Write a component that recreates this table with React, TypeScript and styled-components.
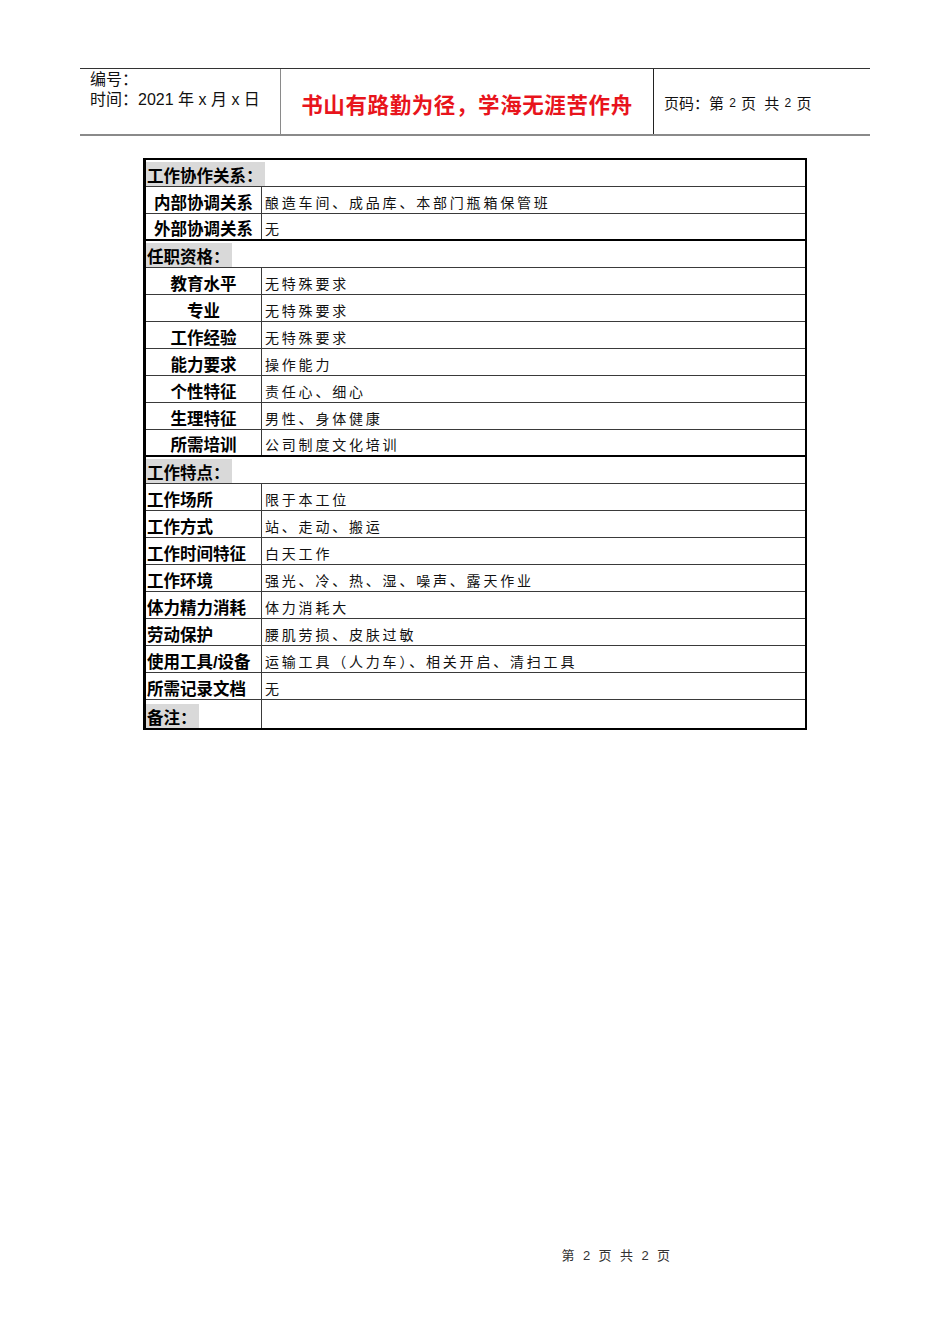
import React from "react";
import styled, { createGlobalStyle } from "styled-components";

const GlobalStyle = createGlobalStyle`
  html, body {
    margin: 0;
    padding: 0;
    background: #ffffff;
  }
  body {
    font-family: "Liberation Sans", "Noto Sans CJK SC", sans-serif;
    color: #000;
  }
`;

type Row =
  | { kind: "section"; title: string; thick?: boolean; withCell?: boolean }
  | { kind: "item"; label: string; value: string; center?: boolean; thick?: boolean };

const rows: Row[] = [
  { kind: "section", title: "工作协作关系：" },
  { kind: "item", label: "内部协调关系", value: "酿造车间、成品库、本部门瓶箱保管班", center: true },
  { kind: "item", label: "外部协调关系", value: "无", center: true, thick: true },
  { kind: "section", title: "任职资格：" },
  { kind: "item", label: "教育水平", value: "无特殊要求", center: true },
  { kind: "item", label: "专业", value: "无特殊要求", center: true },
  { kind: "item", label: "工作经验", value: "无特殊要求", center: true },
  { kind: "item", label: "能力要求", value: "操作能力", center: true },
  { kind: "item", label: "个性特征", value: "责任心、细心", center: true },
  { kind: "item", label: "生理特征", value: "男性、身体健康", center: true },
  { kind: "item", label: "所需培训", value: "公司制度文化培训", center: true, thick: true },
  { kind: "section", title: "工作特点：" },
  { kind: "item", label: "工作场所", value: "限于本工位" },
  { kind: "item", label: "工作方式", value: "站、走动、搬运" },
  { kind: "item", label: "工作时间特征", value: "白天工作" },
  { kind: "item", label: "工作环境", value: "强光、冷、热、湿、噪声、露天作业" },
  { kind: "item", label: "体力精力消耗", value: "体力消耗大" },
  { kind: "item", label: "劳动保护", value: "腰肌劳损、皮肤过敏" },
  { kind: "item", label: "使用工具/设备", value: "运输工具（人力车）、相关开启、清扫工具" },
  { kind: "item", label: "所需记录文档", value: "无" },
  { kind: "section", title: "备注：", withCell: true },
];

const App = () => {
  return (
    <Page>
      <GlobalStyle />
      <Header>
        <InfoCell>
          <InfoLine>编号：</InfoLine>
          <InfoLine>时间：2021 年 x 月 x 日</InfoLine>
        </InfoCell>
        <MottoCell>书山有路勤为径，学海无涯苦作舟</MottoCell>
        <PageCell>
          页码：第 <Num>2</Num> 页&nbsp; 共 <Num>2</Num> 页
        </PageCell>
      </Header>

      <Sheet>
        {rows.map((row, i) =>
          row.kind === "section" ? (
            <SheetRow key={i} $thick={row.thick} $last={i === rows.length - 1}>
              <SectionCell $withCell={row.withCell}>
                <SectionTitle>{row.title}</SectionTitle>
              </SectionCell>
              {row.withCell && <ValueCell />}
            </SheetRow>
          ) : (
            <SheetRow key={i} $thick={row.thick} $last={i === rows.length - 1}>
              <LabelCell $center={row.center}>{row.label}</LabelCell>
              <ValueCell>{row.value}</ValueCell>
            </SheetRow>
          )
        )}
      </Sheet>

      <Footer>第 2 页 共 2 页</Footer>
    </Page>
  );
};

export default App;

// ===== Styled Components ===== //

const Page = styled.div`
  width: 950px;
  min-height: 1344px;
  box-sizing: border-box;
  padding: 68px 80px 0 80px;
  display: flex;
  flex-direction: column;
`;

const Header = styled.div`
  display: flex;
  width: 790px;
  height: 68px;
  box-sizing: border-box;
  border-top: 1px solid #333;
  border-bottom: 2px solid #8a8a8a;
`;

const InfoCell = styled.div`
  width: 201px;
  box-sizing: border-box;
  padding: 1px 0 0 10px;
  border-right: 1px solid #8a8a8a;
`;

const InfoLine = styled.div`
  font-size: 16px;
  line-height: 20px;
  color: #111;
`;

const MottoCell = styled.div`
  width: 373px;
  box-sizing: border-box;
  display: flex;
  align-items: center;
  justify-content: center;
  padding-top: 4px;
  border-right: 1px solid #222;
  font-size: 21.5px;
  font-weight: 700;
  color: #e8141c;
  letter-spacing: 0.6px;
`;

const PageCell = styled.div`
  flex: 1;
  display: flex;
  align-items: center;
  padding: 2px 0 0 10px;
  font-size: 15px;
  color: #111;
  white-space: pre;
`;

const Num = styled.span`
  font-size: 12px;
  margin: 0 1px;
`;

const Sheet = styled.div`
  margin: 22px 0 0 63px;
  width: 664px;
  box-sizing: border-box;
  border: 2px solid #000;
  border-left-width: 3px;
`;

const SheetRow = styled.div<{ $thick?: boolean; $last?: boolean }>`
  display: flex;
  height: ${(p) => (p.$last ? "27.5px" : "27px")};
  box-sizing: border-box;
  border-bottom: ${(p) =>
    p.$last ? "none" : p.$thick ? "2.5px solid #000" : "1px solid #3a3a3a"};
`;

const SectionCell = styled.div<{ $withCell?: boolean }>`
  ${(p) => (p.$withCell ? "width: 116px;" : "flex: 1;")}
  box-sizing: border-box;
  display: flex;
  align-items: flex-end;
  padding: 0;
  ${(p) => (p.$withCell ? "border-right: 1px solid #3a3a3a;" : "")}
`;

const SectionTitle = styled.span`
  display: inline-block;
  height: 24px;
  line-height: 28px;
  padding: 0 2px 0 1px;
  background: #d9d9d9;
  font-size: 16.5px;
  font-weight: 700;
  white-space: nowrap;
`;

const LabelCell = styled.div<{ $center?: boolean }>`
  width: 116px;
  flex-shrink: 0;
  box-sizing: border-box;
  display: flex;
  align-items: center;
  justify-content: ${(p) => (p.$center ? "center" : "flex-start")};
  padding: 3px 0 0 ${(p) => (p.$center ? "0" : "1px")};
  border-right: 1px solid #3a3a3a;
  font-size: 16.5px;
  font-weight: 700;
  white-space: nowrap;
`;

const ValueCell = styled.div`
  flex: 1;
  display: flex;
  align-items: center;
  padding: 3px 0 0 3px;
  font-size: 14px;
  letter-spacing: 2.8px;
  color: #111;
  white-space: nowrap;
`;

const Footer = styled.div`
  margin-top: auto;
  padding: 0 0 80px 284px;
  text-align: center;
  font-size: 13px;
  line-height: 16px;
  letter-spacing: 2.4px;
  color: #333;
  white-space: pre;
`;
